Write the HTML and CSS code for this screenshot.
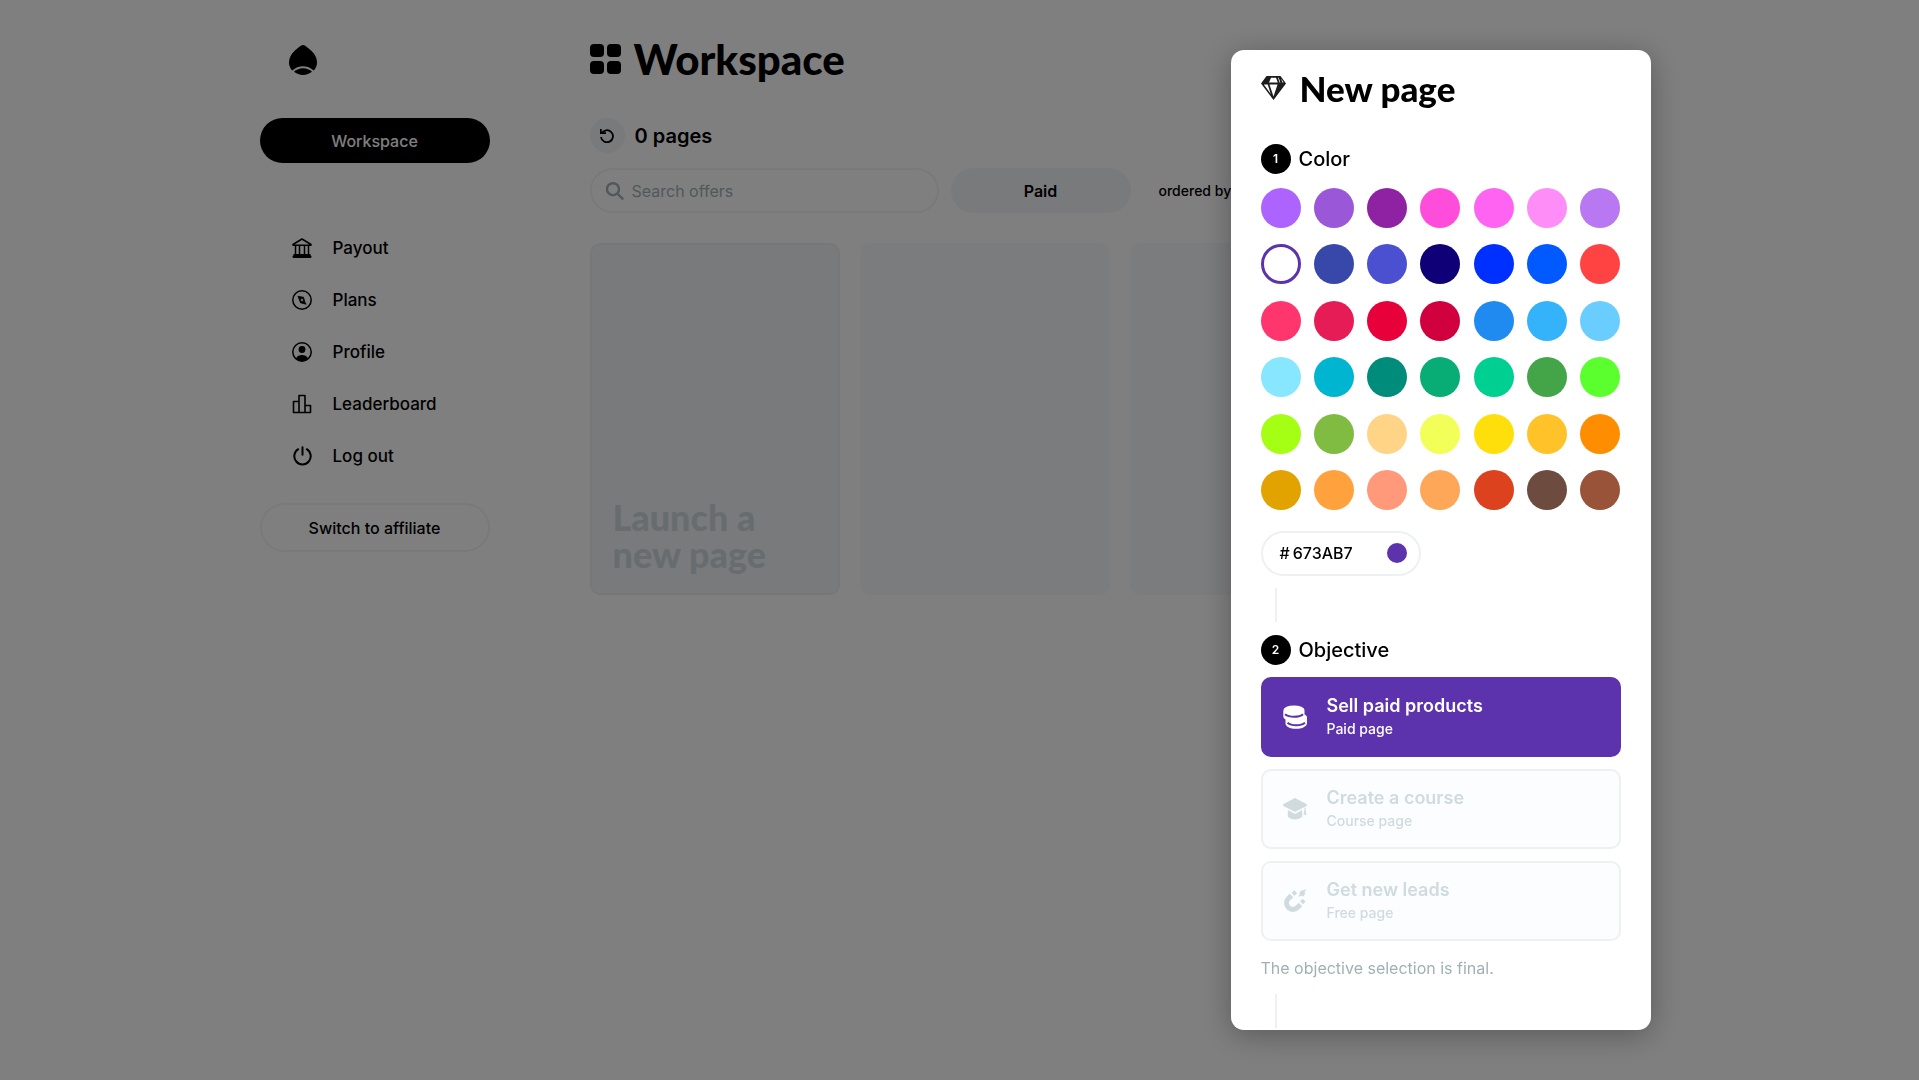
FILE: index.html
```html
<!DOCTYPE html>
<html lang="en">
<head>
<meta charset="utf-8">
<meta name="viewport" content="width=device-width, initial-scale=1">
<title>Workspace</title>
<link rel="stylesheet" href="styles.css">
</head>
<body>
<div class="layout">
  <aside class="sidebar">
    <a class="logo" href="#" aria-label="Home">
      <svg width="28" height="30" viewBox="0 0 28 30"><path d="M14 0C16 0 20 3.500 23 6.500C26 9.500 28 13 28 17.500C28 21 26.500 23.500 24.800 25.600C21.500 22.500 18 21.200 14 21.200S6.500 22.500 3.200 25.600C1.500 23.500 0 21 0 17.500C0 13 2 9.500 5 6.500C8 3.500 12 0 14 0Z"/><path d="M5 26.800C7.500 24.600 10.500 23.200 14 23.200S20.500 24.600 23 26.800C20.500 28.800 17.500 30 14 30S7.500 28.800 5 26.800Z"/></svg>
    </a>
    <button class="pill pill-dark" type="button">Workspace</button>
    <nav class="nav">
      <a href="#"><svg class="nav-icon" viewBox="0 0 20 20"><path d="M1 6.500 10 1l9 5.500v.8H1Z" fill="none" stroke="currentColor" stroke-width="1.500" stroke-linejoin="round"/><path d="M3.500 8v8M7.500 8v8M12.500 8v8M16.500 8v8" stroke="currentColor" stroke-width="1.500"/><rect x="1.500" y="16" width="17" height="2"/><rect x=".5" y="17.500" width="19" height="2.500" rx="1"/></svg>Payout</a>
      <a href="#"><svg class="nav-icon" viewBox="0 0 20 20"><circle cx="10" cy="10" r="9.200" fill="none" stroke="currentColor" stroke-width="1.500"/><path fill-rule="evenodd" d="M6 6.300 11.500 7.300 13 12.500 14.200 14.200 8.500 12.800ZM8.600 8.600v2.800h2.800V8.600Z" stroke="currentColor" stroke-width=".8" stroke-linejoin="round"/></svg>Plans</a>
      <a href="#"><svg class="nav-icon" viewBox="0 0 20 20"><circle cx="10" cy="10" r="9.200" fill="none" stroke="currentColor" stroke-width="1.500"/><circle cx="10" cy="7.500" r="3.400"/><path d="M4 16.200C5.200 13.700 7.500 13 10 13s4.800.7 6 3.200C14.500 18.200 12.300 19.200 10 19.200S5.500 18.200 4 16.200Z"/></svg>Profile</a>
      <a href="#"><svg class="nav-icon" viewBox="0 0 20 20"><path d="M1.500 7.500H7v11H1.500ZM7 1.500h6v17H7ZM13 11.500h5.500v7H13Z" fill="none" stroke="currentColor" stroke-width="1.600" stroke-linejoin="round"/></svg>Leaderboard</a>
      <a href="#"><svg class="nav-icon" viewBox="0 0 20 20"><path d="M6.200 3.200A8.200 8.200 0 1 0 14.800 3.200M10.500 1.200v7.600" fill="none" stroke="currentColor" stroke-width="2" stroke-linecap="round"/></svg>Log out</a>
    </nav>
    <button class="pill pill-outline" type="button">Switch to affiliate</button>
  </aside>

  <main class="main">
    <h1 class="page-title">
      <svg width="31" height="30" viewBox="0 0 31 30"><rect width="14" height="13" rx="4"/><rect x="17" width="14" height="13" rx="4"/><rect y="17" width="14" height="13" rx="4"/><rect x="17" y="17" width="14" height="13" rx="4"/></svg>
      Workspace
    </h1>
    <div class="count">
      <button class="refresh" type="button" aria-label="Refresh"><svg width="14" height="14" viewBox="0 0 14 14"><path d="M1.600 4.500A6 6 0 1 1 1 8" fill="none" stroke="currentColor" stroke-width="1.800"/><path d="M0 0h1.700v3.300H6V5H0Z"/></svg></button>
      <h2>0 pages</h2>
    </div>
    <div class="filters">
      <label class="search">
        <svg width="18" height="18" viewBox="0 0 18 18"><path d="M7 1.200a6 6 0 1 1 0 12 6 6 0 0 1 0-12ZM11.300 11.500 16.500 16.700" fill="none" stroke="currentColor" stroke-width="2.400" stroke-linecap="round"/></svg>
        <input type="text" placeholder="Search offers" aria-label="Search offers">
      </label>
      <button class="filter" type="button">Paid</button>
      <span class="order">ordered by</span>
    </div>
    <div class="cards">
      <a class="card card-new" href="#">Launch a<br>new page</a>
      <div class="card"></div>
      <div class="card"></div>
      <div class="card"></div>
    </div>
  </main>
</div>

<div class="overlay">
  <div class="overlay-inner">
    <section class="modal" role="dialog" aria-labelledby="modal-title">
      <h2 class="modal-title" id="modal-title">
        <svg width="25" height="24" viewBox="0 0 25 24"><path fill-rule="evenodd" d="M5.500 0h14L25 7.500 12.500 24 0 7.500ZM10 1.800 8 6.500h8.800L15 1.800ZM17 1.800 18.600 6.500H19.400L17.700 1.800ZM20 2.500 21.400 6.500H22.600ZM2.800 8.600 9.800 18 6.700 8.600ZM8.500 8.600 12.500 20.500 16.500 8.600Z"/></svg>
        New page
      </h2>

      <h3 class="step"><span class="step-no">1</span>Color</h3>
      <div class="swatches" role="radiogroup" aria-label="Color">
        <input type="radio" name="color" aria-label="#AD64FF" style="--c:#ad64ff">
        <input type="radio" name="color" aria-label="#9A57D8" style="--c:#9a57d8">
        <input type="radio" name="color" aria-label="#8E22A3" style="--c:#8e22a3">
        <input type="radio" name="color" aria-label="#FF4DDB" style="--c:#ff4ddb">
        <input type="radio" name="color" aria-label="#FF63F2" style="--c:#ff63f2">
        <input type="radio" name="color" aria-label="#FF8DF7" style="--c:#ff8df7">
        <input type="radio" name="color" aria-label="#B878F2" style="--c:#b878f2">
        <input type="radio" name="color" aria-label="#673AB7" style="--c:#5c33ac" checked>
        <input type="radio" name="color" aria-label="#3848AA" style="--c:#3848aa">
        <input type="radio" name="color" aria-label="#4A50D0" style="--c:#4a50d0">
        <input type="radio" name="color" aria-label="#100078" style="--c:#100078">
        <input type="radio" name="color" aria-label="#0030FF" style="--c:#0030ff">
        <input type="radio" name="color" aria-label="#005AFF" style="--c:#005aff">
        <input type="radio" name="color" aria-label="#FF4242" style="--c:#ff4242">
        <input type="radio" name="color" aria-label="#FF366E" style="--c:#ff366e">
        <input type="radio" name="color" aria-label="#E61C57" style="--c:#e61c57">
        <input type="radio" name="color" aria-label="#E8003A" style="--c:#e8003a">
        <input type="radio" name="color" aria-label="#D0003F" style="--c:#d0003f">
        <input type="radio" name="color" aria-label="#1F8BF1" style="--c:#1f8bf1">
        <input type="radio" name="color" aria-label="#34B2FA" style="--c:#34b2fa">
        <input type="radio" name="color" aria-label="#69CDFF" style="--c:#69cdff">
        <input type="radio" name="color" aria-label="#87E7FF" style="--c:#87e7ff">
        <input type="radio" name="color" aria-label="#00B5D0" style="--c:#00b5d0">
        <input type="radio" name="color" aria-label="#008C7B" style="--c:#008c7b">
        <input type="radio" name="color" aria-label="#07AD74" style="--c:#07ad74">
        <input type="radio" name="color" aria-label="#00CF92" style="--c:#00cf92">
        <input type="radio" name="color" aria-label="#43A547" style="--c:#43a547">
        <input type="radio" name="color" aria-label="#5CFF2E" style="--c:#5cff2e">
        <input type="radio" name="color" aria-label="#A5FF14" style="--c:#a5ff14">
        <input type="radio" name="color" aria-label="#80BB42" style="--c:#80bb42">
        <input type="radio" name="color" aria-label="#FFD486" style="--c:#ffd486">
        <input type="radio" name="color" aria-label="#F2FF58" style="--c:#f2ff58">
        <input type="radio" name="color" aria-label="#FFDF0B" style="--c:#ffdf0b">
        <input type="radio" name="color" aria-label="#FFC229" style="--c:#ffc229">
        <input type="radio" name="color" aria-label="#FF8D00" style="--c:#ff8d00">
        <input type="radio" name="color" aria-label="#E2A300" style="--c:#e2a300">
        <input type="radio" name="color" aria-label="#FFA23E" style="--c:#ffa23e">
        <input type="radio" name="color" aria-label="#FF9979" style="--c:#ff9979">
        <input type="radio" name="color" aria-label="#FFA758" style="--c:#ffa758">
        <input type="radio" name="color" aria-label="#DB421D" style="--c:#db421d">
        <input type="radio" name="color" aria-label="#6D4B3F" style="--c:#6d4b3f">
        <input type="radio" name="color" aria-label="#985338" style="--c:#985338">
      </div>
      <label class="hex"><span>#</span><input type="text" value="673AB7" aria-label="Hex color"><i class="hex-dot"></i></label>

      <div class="connector"></div>

      <h3 class="step"><span class="step-no">2</span>Objective</h3>
      <div class="objectives" role="radiogroup" aria-label="Objective">
        <label class="objective">
          <input type="radio" name="objective" checked>
          <svg width="24" height="24" viewBox="0 0 24 24"><ellipse cx="11" cy="5" rx="10.500" ry="4.600"/><path d="M.3 5.500h21.200v4C23 10 24 11 24 12.500V18c0 3.500-5 5.800-11 5.800S2.500 21.500 2.500 18.500v-4C1 13.500.3 12.500.3 11Z"/><path class="cut" d="M2 9.300c4 3.400 14.500 3.400 18 0M4.500 17.800c4 3.400 13.500 3.400 17.500 0"/></svg>
          <span class="objective-text"><b>Sell paid products</b><small>Paid page</small></span>
        </label>
        <label class="objective">
          <input type="radio" name="objective">
          <svg width="24" height="24" viewBox="0 0 24 24"><path d="M12 1 23 6.800c1.300.7 1.300 1.700 0 2.400L12 15 1 9.200C-.3 8.500-.3 7.500 1 6.800Z"/><path d="M4.800 13 12 17l7.200-4v6.500c-1.500 2-4.500 3-7.200 3s-5.700-1-7.200-3ZM21.500 11l1.200-.7v2.700l.8 4.700h-3l1-4.700Z"/></svg>
          <span class="objective-text"><b>Create a course</b><small>Course page</small></span>
        </label>
        <label class="objective">
          <input type="radio" name="objective">
          <svg width="24" height="24" viewBox="0 0 24 24"><path d="M8.500 6.500 5.400 9.600A6.360 6.360 0 0 0 14.400 18.600L17.500 15.500" fill="none" stroke="currentColor" stroke-width="5"/><path d="M11.300 1.300 14.200 4.200 11.600 6.800 8.700 3.900ZM19.700 9.700 22.600 12.600 20 15.200 17.100 12.300ZM23.300.3 17.600 2 16.300 4.800 17 5.200 15 7.800 19 6.800 20.200 7.800 22.200 4.500 21.300 3.800Z"/></svg>
          <span class="objective-text"><b>Get new leads</b><small>Free page</small></span>
        </label>
      </div>
      <p class="note">The objective selection is final.</p>
      <div class="connector"></div>
    </section>
  </div>
</div>
</body>
</html>
```

FILE: styles.css
```css
* { box-sizing: border-box; }

body {
  margin: 0;
  background: #fff;
  color: #000;
  font-family: Inter, "Liberation Sans", sans-serif;
  font-size: 16px;
}

h1, h2, h3, p { margin: 0; }
a { color: inherit; text-decoration: none; }
button, input { font: inherit; color: inherit; }
button { border: 0; padding: 0; cursor: pointer; }
svg { flex: none; fill: currentColor; }

/* Page */
.layout {
  display: grid;
  grid-template-columns: 230px minmax(0, 1fr);
  column-gap: 100px;
  max-width: 1400px;
  margin: 0 auto;
}

.sidebar { display: flex; flex-direction: column; padding-top: 45px; }
.logo { display: flex; height: 30px; margin: 0 0 43px 29px; }

.pill { border-radius: 25px; font-weight: 500; text-align: center; }
.pill-dark { height: 45px; background: #000; color: #fff; }
.pill-outline { height: 49px; background: #fff; border: 2px solid #f0f5f5; }

.nav { display: flex; flex-direction: column; margin: 59px 0 21px; }
.nav a {
  display: flex;
  align-items: center;
  gap: 21px;
  height: 52px;
  padding-left: 32px;
  font-size: 17px;
  font-weight: 500;
}
.nav-icon { width: 20px; height: 20px; }

.main { padding-top: 35px; }
.page-title {
  display: flex;
  align-items: center;
  gap: 13px;
  height: 48px;
  font-family: Lato, sans-serif;
  font-size: 42px;
  font-weight: 900;
  line-height: 48px;
}
.count { display: flex; align-items: center; gap: 10px; margin-top: 35px; }
.count h2 { font-size: 20px; font-weight: 600; }
.refresh {
  display: flex;
  align-items: center;
  justify-content: center;
  width: 35px;
  height: 35px;
  border-radius: 50%;
  background: #f2f4f8;
}

.filters { display: flex; align-items: center; gap: 12px; margin-top: 15px; }
.search {
  display: flex;
  align-items: center;
  gap: 8px;
  width: 349px;
  height: 45px;
  padding: 0 14px;
  border: 2px solid #f0f4f4;
  border-radius: 23px;
  color: #a0b1b6;
}
.search input { flex: 1; min-width: 0; padding: 0; border: 0; background: none; outline: 0; }
.search input::placeholder { color: #a0b1b6; opacity: 1; }
.filter { width: 180px; height: 45px; border-radius: 23px; background: #f2f4f8; font-weight: 600; }
.order { margin-left: 16px; font-size: 14px; font-weight: 500; }

.cards { display: grid; grid-template-columns: repeat(4, 250px); gap: 20px; margin-top: 30px; }
.card { height: 352px; border-radius: 10px; background: #f7f9fb; }
.card-new {
  display: flex;
  align-items: flex-end;
  padding: 20px 20px 20px 21px;
  border: 2px solid #edf0f1;
  background: #f3f5f8;
  color: #cedbde;
  font-family: Lato, sans-serif;
  font-size: 36px;
  font-weight: 900;
  line-height: 37px;
}

/* Dialog */
.overlay {
  position: fixed;
  inset: 0;
  padding: 50px 0;
  background: rgba(0, 0, 0, .5);
}
.overlay-inner {
  display: flex;
  justify-content: flex-end;
  max-width: 1400px;
  height: 100%;
  margin: 0 auto;
  padding-right: 9px;
}
.modal {
  width: 420px;
  padding: 18px 30px 0;
  overflow: hidden;
  border-radius: 13px;
  background: #fff;
  box-shadow: 0 5px 30px rgba(0, 0, 0, .3);
}
.modal-title {
  display: flex;
  align-items: center;
  gap: 14px;
  height: 40px;
  margin-bottom: 35px;
  font-family: Lato, sans-serif;
  font-size: 35px;
  font-weight: 900;
}
.modal-title svg { color: #1c1c1e; }

.step { display: flex; align-items: center; gap: 8px; height: 30px; font-size: 20px; font-weight: 500; line-height: 30px; padding-top: 1px; }
.step-no {
  display: flex;
  align-items: center;
  justify-content: center;
  width: 30px;
  height: 30px;
  border-radius: 50%;
  background: #000;
  color: #fff;
  font-size: 12px;
  font-weight: 600;
}

.swatches {
  display: grid;
  grid-template-columns: repeat(7, 40px);
  justify-content: space-between;
  align-content: space-between;
  height: 322px;
  margin: 15px 0 21px;
}
.swatches input {
  appearance: none;
  width: 40px;
  height: 40px;
  margin: 0;
  border-radius: 50%;
  background: var(--c);
}
.swatches input:checked { border: 3px solid var(--c); background: #fff; }

.hex {
  display: flex;
  align-items: center;
  gap: 3px;
  width: 160px;
  height: 45px;
  padding: 0 12px 1px 17px;
  border: 2px solid #edf1f1;
  border-radius: 23px;
  font-weight: 500;
}
.hex input { flex: 1; min-width: 0; padding: 0; border: 0; outline: 0; }
.hex-dot { width: 20px; height: 20px; border-radius: 50%; background: #5c33ac; }

.connector { width: 2px; height: 34px; margin: 12px 14px; background: #edf1f1; }

.objectives { display: flex; flex-direction: column; gap: 12px; margin: 13px 0 15px; }
.objective {
  display: flex;
  align-items: center;
  gap: 20px;
  height: 80px;
  padding: 0 20px 1px;
  border: 2px solid #edf1f1;
  border-radius: 10px;
  background: #fcfdff;
  color: #cfdbdf;
}
.objective input { position: absolute; opacity: 0; }
.objective:has(:checked) { border-color: #5c33ac; background: #5c33ac; color: #fff; }
.objective-text { display: flex; flex-direction: column; }
.objective b { font-size: 18px; font-weight: 600; line-height: 24px; }
.objective small { font-size: 14px; font-weight: 500; line-height: 22px; }
.cut { fill: none; stroke: #5c33ac; stroke-width: 2; }

.note { color: #a0b1b6; font-size: 16px; line-height: 24px; margin-bottom: 14px; }
```
